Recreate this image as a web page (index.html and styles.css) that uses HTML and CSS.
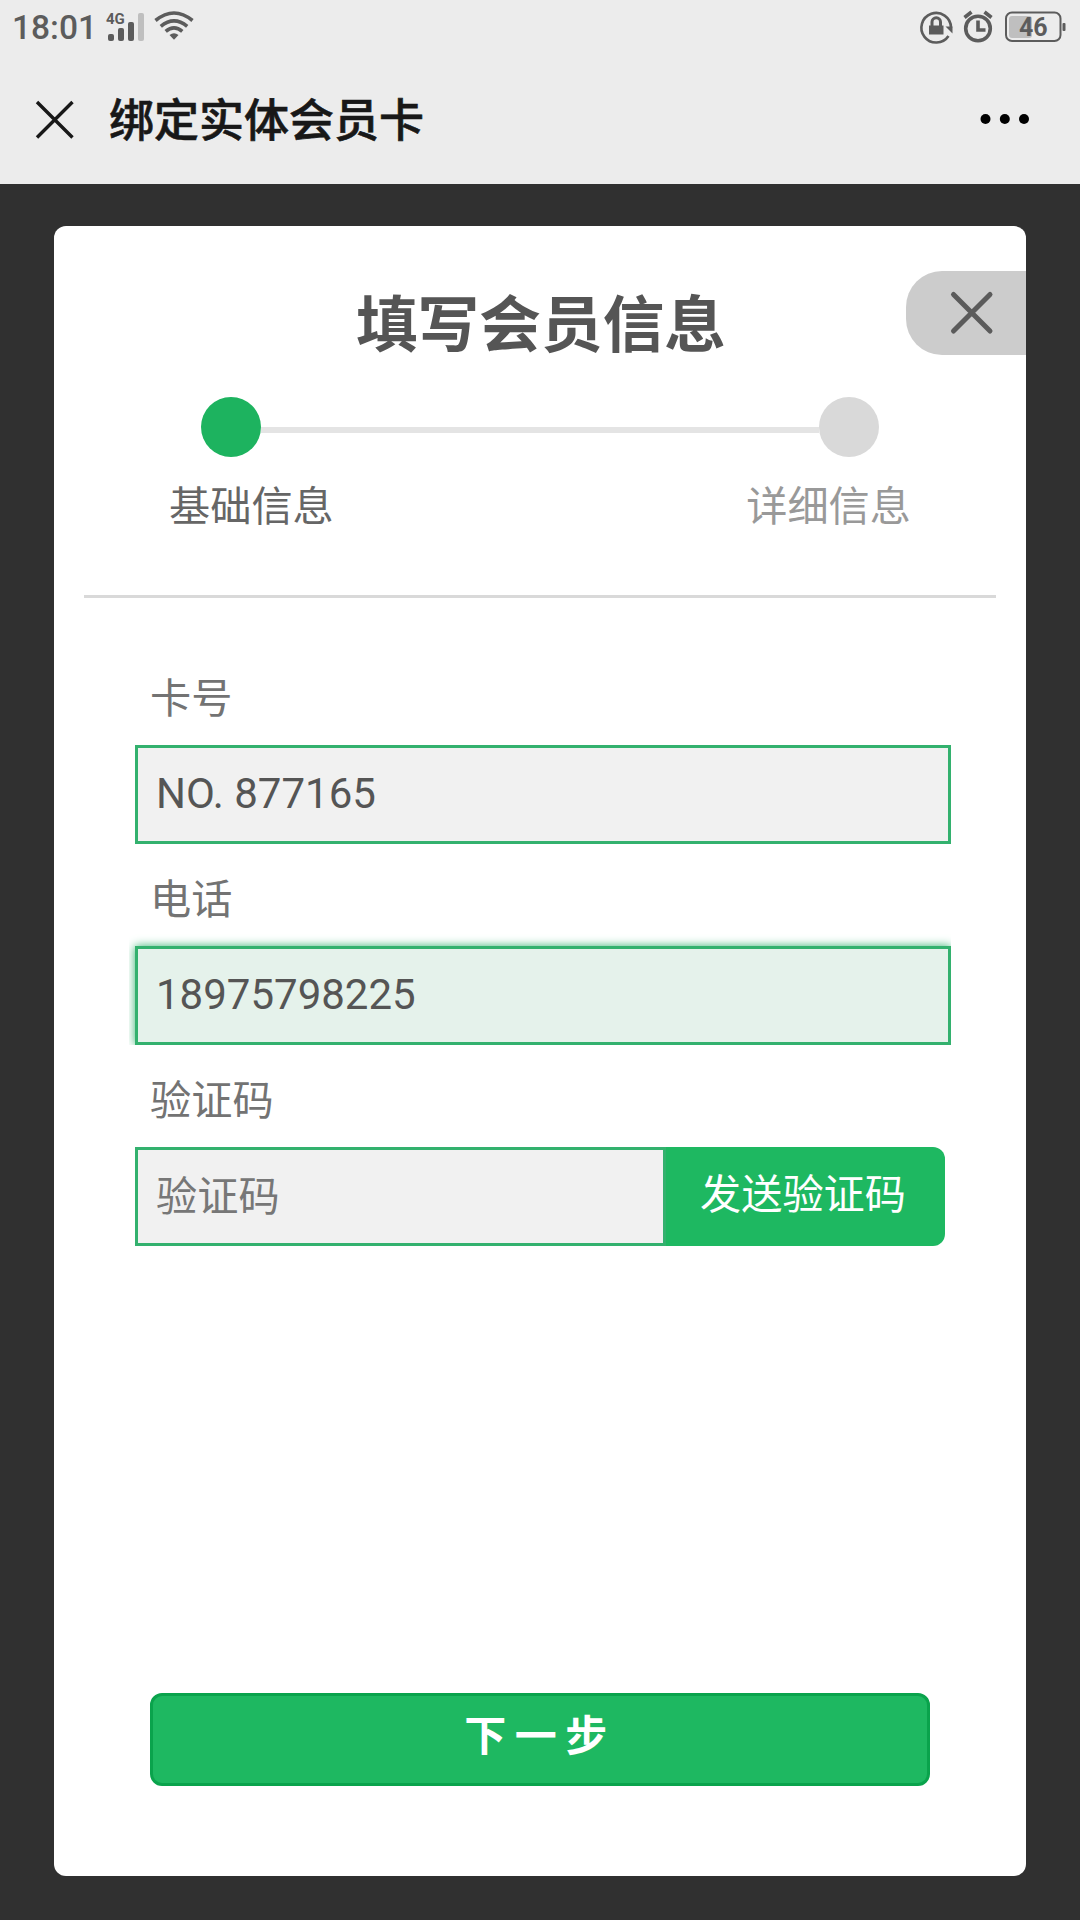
FILE: index.html
```html
<!DOCTYPE html>
<html lang="zh-CN">
<head>
<meta charset="utf-8">
<title>绑定实体会员卡</title>
<link rel="stylesheet" href="styles.css">
</head>
<body>
<header class="topbar">
  <div class="status">
    <span class="clock">18:01</span>
    <svg class="signal" width="40" height="32" viewBox="0 0 40 32">
      <text class="network" x="0" y="13">4G</text>
      <rect x="2" y="23" width="6" height="7" rx="2"/>
      <rect x="12" y="17" width="6" height="13" rx="2"/>
      <rect x="22" y="11" width="6" height="19" rx="2"/>
      <rect class="weak" x="32" y="2" width="6" height="28" rx="2"/>
    </svg>
    <svg class="wifi" width="40" height="30" viewBox="0 0 40 30">
      <path d="M1.500 9.500Q20-5.500 38.500 9.500M6.800 15.300Q20 4.300 33.200 15.300M11.700 20.300Q20 13.300 28.300 20.300"/>
      <path class="solid" d="M15.500 24Q20 20.500 24.500 24L20 28.700Z"/>
    </svg>
    <svg class="lock" width="34" height="34" viewBox="0 0 34 34">
      <path d="M31 16.500A14.800 14.800 0 1 0 28.500 25"/>
      <path class="solid" d="M25.500 15.500H32.500V22.500Z"/>
      <path class="solid" d="M9 14.500H23.500V23.500H9Z"/>
      <path class="shackle" d="M12 15V11A4.200 4.200 0 0 1 20.500 11V15"/>
    </svg>
    <svg class="alarm" width="30" height="34" viewBox="0 0 30 34">
      <circle cx="15" cy="18.500" r="12.300"/>
      <path d="M1.500 7.500L8.500 2M21.500 2L28.500 7.500M15 10.500V20H22.500"/>
    </svg>
    <svg class="battery" width="62" height="32" viewBox="0 0 62 32">
      <rect class="charge" x="4" y="5" width="23" height="22" rx="3"/>
      <rect class="shell" x="1" y="1.500" width="54.500" height="28.500" rx="6"/>
      <rect x="57.500" y="12" width="3" height="8" rx="1"/>
      <text class="level" x="14" y="24.500">46</text>
    </svg>
  </div>
  <div class="nav">
    <svg class="nav-close" width="38" height="38" viewBox="0 0 38 38"><path d="M1 1L36.500 36.500M36.500 1L1 36.500"/></svg>
    <h1 class="nav-title">绑定实体会员卡</h1>
    <svg class="more" width="50" height="12" viewBox="0 0 50 12"><circle cx="5.500" cy="6" r="5"/><circle cx="24.800" cy="6" r="5"/><circle cx="44" cy="6" r="5"/></svg>
  </div>
</header>
<main class="card">
  <button class="dismiss" aria-label="关闭"><svg width="42" height="42" viewBox="0 0 42 42"><path d="M2.500 2.500L39 39M39 2.500L2.500 39"/></svg></button>
  <h2 class="title">填写会员信息</h2>
  <div class="track"><i class="dot active"></i><i class="rail"></i><i class="dot"></i></div>
  <div class="steps"><span class="current">基础信息</span><span>详细信息</span></div>
  <form class="form">
    <label class="label">卡号</label>
    <div class="field">NO. 877165</div>
    <label class="label">电话</label>
    <div class="field focused">18975798225</div>
    <label class="label">验证码</label>
    <div class="code-row">
      <div class="field placeholder">验证码</div>
      <button type="button" class="send">发送验证码</button>
    </div>
  </form>
  <button class="next">下一步</button>
</main>
</body>
</html>
```
FILE: styles.css
```css
* { box-sizing: border-box; }
body {
  margin: 0;
  height: 1920px;
  display: flex;
  flex-direction: column;
  background: #303030;
  font-family: Roboto, "Noto Sans CJK SC", sans-serif;
  overflow: hidden;
}
h1, h2 { margin: 0; }
button { margin: 0; padding: 0; border: 0; font-family: inherit; }
svg { display: block; flex: none; overflow: visible; }

.topbar { height: 184px; background: #ececec; }
.status { height: 56px; display: flex; align-items: flex-start; fill: #5c5c5c; color: #5c5c5c; }
.clock { width: 93px; margin: 8px 0 0 12px; font-size: 33.5px; line-height: 40px; font-weight: 500; }
.signal { margin: 11px 0 0 1px; }
.network { font-size: 15px; font-weight: 700; }
.weak { fill: #bfbfbf; }
.wifi { margin: 11px 0 0 8px; fill: none; stroke: #5c5c5c; stroke-width: 3.6; }
.solid { fill: #5c5c5c; stroke: none; }
.lock { margin: 11px 0 0 auto; fill: none; stroke: #5c5c5c; stroke-width: 2.6; }
.shackle { stroke-width: 3; }
.alarm { margin: 10px 0 0 9px; fill: none; stroke: #5c5c5c; stroke-width: 3.6; }
.battery { margin: 11px 13px 0 12px; }
.charge { fill: #bfbfbf; }
.shell { fill: none; stroke: #5c5c5c; stroke-width: 2; }
.level { font-size: 25px; font-weight: 700; }

.nav { height: 128px; display: flex; align-items: flex-start; padding: 0 50px 0 36px; }
.nav-close { margin-top: 45px; fill: none; stroke: #181818; stroke-width: 3.4; }
.nav-title { margin: 36px auto 0 35px; font-size: 45px; line-height: 60px; font-weight: 500; color: #181818; -webkit-text-stroke: .6px #181818; }
.more { margin-top: 57px; }

.card {
  position: relative;
  width: 972px;
  height: 1650px;
  margin: 42px auto 0;
  padding-top: 60px;
  border-radius: 12px;
  background: #fff;
}
.dismiss {
  position: absolute;
  top: 45px;
  right: 0;
  width: 120px;
  height: 84px;
  padding-left: 45px;
  border-radius: 36px 0 0 36px;
  background: #ccc;
}
.dismiss svg { fill: none; stroke: #5b5b5b; stroke-width: 5; stroke-linecap: round; }
.title { height: 111px; padding-left: 2px; font-size: 61.7px; line-height: 80px; font-weight: 700; color: #555; text-align: center; }
.track { display: flex; align-items: center; padding: 0 147px; }
.dot { width: 60px; height: 60px; border-radius: 50%; background: #d9d9d9; }
.dot.active { background: #1db35f; }
.rail { flex: 1; height: 6px; margin-top: 6px; background: #e4e4e4; }
.steps {
  display: flex;
  justify-content: space-between;
  height: 141px;
  margin: 0 30px;
  padding: 20px 85px 0;
  border-bottom: 3px solid #d9d9d9;
  font-size: 41.2px;
  line-height: 60px;
  color: #999;
}
.steps .current { color: #666; }

.form { display: flex; flex-direction: column; width: 816px; margin: 45px 0 0 81px; }
.label { height: 102px; padding: 26px 0 0 15px; font-size: 41.2px; line-height: 60px; color: #737373; }
.field {
  height: 99px;
  padding-left: 18px;
  border: 3px solid #33b16e;
  background: #f1f1f1;
  font-size: 42px;
  line-height: 91px;
  color: #555;
}
.focused {
  background: #e5f2eb;
  box-shadow: 0 0 9px #33b16e;
  clip-path: inset(-12px 0 0 -6px);
}
.code-row { display: flex; }
.code-row .field { width: 531px; }
.field.placeholder { font-size: 41.2px; line-height: 95px; color: #777; }
.send {
  width: 279px;
  height: 99px;
  padding: 0 5px 12px 0;
  border-radius: 0 12px 12px 0;
  background: #1eb861;
  color: #fff;
  font-size: 41.2px;
}
.next {
  display: block;
  width: 780px;
  height: 93px;
  margin: 447px auto 0;
  padding-bottom: 14px;
  border: 3px solid #0aa34c;
  border-radius: 12px;
  background: #1eb861;
  color: #fff;
  font-size: 42px;
  font-weight: 700;
  letter-spacing: 8.500px;
}
```
